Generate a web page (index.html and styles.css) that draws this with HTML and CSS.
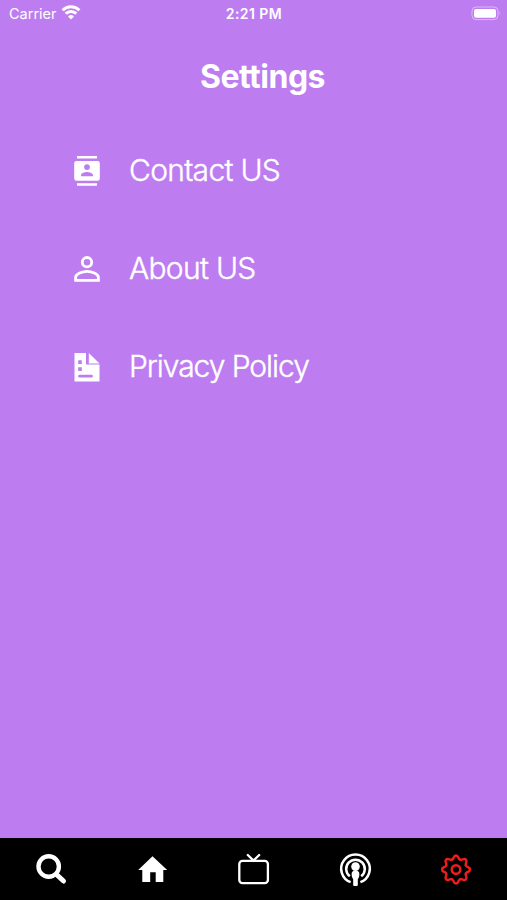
FILE: index.html
```
<!DOCTYPE html>
<html lang="en">
<head>
  <meta charset="utf-8">
  <title>Settings</title>
  <link rel="stylesheet" href="styles.css">
</head>
<body>
  <div class="screen">
    <header class="status-bar">
      <div class="carrier">
        <span>Carrier</span>
        <svg width="20" height="15" viewBox="0 0 20 15" fill="none" stroke="#fff" stroke-width="2.9">
          <path d="M1.6 5.2a12 12 0 0 1 16.8 0"/>
          <path d="M4.7 8.6a7.6 7.6 0 0 1 10.6 0"/>
          <path d="M10 14.5l-3-3a4.4 4.4 0 0 1 6 0z" fill="#fff" stroke="none"/>
        </svg>
      </div>
      <span class="time">2:21 PM</span>
      <svg class="battery" width="31" height="15" viewBox="0 0 31 15">
        <rect x="1" y="1" width="26" height="12.6" rx="4" fill="none" stroke="#fff" stroke-opacity=".45"/>
        <rect x="3" y="3" width="22" height="8.8" rx="2" fill="#fff"/>
        <path d="M28.6 5.2q1.7 2 0 4z" fill="#fff" fill-opacity=".5"/>
      </svg>
    </header>

    <h1>Settings</h1>

    <ul class="menu">
      <li>
        <svg width="30" height="32" viewBox="0 0 30 32">
          <path fill="#fff" fill-rule="evenodd" d="M5 1h20v2.6H5zM5 28.2h20v2.6H5zM4.5 6h21a2.3 2.3 0 0 1 2.3 2.3v15.2a2.3 2.3 0 0 1-2.3 2.3h-21a2.3 2.3 0 0 1-2.3-2.3V8.3A2.3 2.3 0 0 1 4.5 6zM15 9.2a2.9 2.9 0 1 0 0 5.8a2.9 2.9 0 0 0 0-5.8zM9 21.3h12v-1.3c0-2-4-3.1-6-3.1s-6 1.1-6 3.1z"/>
        </svg>
        <span class="contact">Contact US</span>
      </li>
      <li>
        <svg width="30" height="32" viewBox="0 0 30 32" fill="none" stroke="#fff" stroke-width="2.8">
          <circle cx="15" cy="9.2" r="4.7"/>
          <path d="M3.6 27.4v-3c0-3.6 7-6.1 11.4-6.1s11.4 2.5 11.4 6.1v3z"/>
        </svg>
        <span class="about">About US</span>
      </li>
      <li>
        <svg width="30" height="32" viewBox="0 0 30 32">
          <path fill="#fff" fill-rule="evenodd" d="M2.5 2H14v11.5h13.5v17h-25zM6.200 9.300h3.600v3.600H6.200zM6.200 16.300h3.600v3.600H6.200zM7.500 23.800h12a1.400 1.400 0 0 1 0 2.800h-12a1.400 1.400 0 0 1 0-2.800z"/>
          <path fill="#fff" d="M16.800 2l10.700 10.400H16.800z"/>
        </svg>
        <span class="privacy">Privacy Policy</span>
      </li>
    </ul>

    <nav class="tab-bar">
      <a class="tab">
        <svg width="36" height="36" viewBox="0 0 36 36" fill="none" stroke="#fff">
          <circle cx="15.7" cy="15.5" r="10.2" stroke-width="4.4"/>
          <path d="M23.5 23.5l7 6.5" stroke-width="5" stroke-linecap="round"/>
        </svg>
      </a>
      <a class="tab">
        <svg width="36" height="36" viewBox="0 0 36 36">
          <path fill="#fff" d="M18.5 5.3L33.2 19h-3.9v12h-7.6v-9.7h-5.500V31H8.300V19H4.200z"/>
        </svg>
      </a>
      <a class="tab">
        <svg width="36" height="36" viewBox="0 0 36 36" fill="none" stroke="#fff" stroke-width="2.3" stroke-linecap="round">
          <rect x="4.3" y="9.8" width="28.6" height="22.4" rx="3.2"/>
          <path d="M12.8 4l5.7 5.6L24.2 4"/>
        </svg>
      </a>
      <a class="tab">
        <svg width="36" height="36" viewBox="0 0 36 36" fill="none" stroke="#fff" stroke-width="2.5">
          <path d="M13.6 31.2a14.3 14.3 0 1 1 9.8 0"/>
          <path d="M12.8 25.3a9.3 9.3 0 1 1 11.4 0"/>
          <circle cx="18.5" cy="15.6" r="4.3" fill="#fff" stroke="none"/>
          <path d="M14.6 23.3q0-3.7 3.9-3.7t3.900 3.700q0 3.500-1.600 5V34q0 1-1 1h-2.600q-1 0-1-1v-5.700q-1.600-1.500-1.600-5z" fill="#fff" stroke="none"/>
        </svg>
      </a>
      <a class="tab active">
        <svg width="36" height="36" viewBox="-18 -18.5 36 36" fill="none" stroke="#f01d1d" stroke-width="2.4" stroke-linecap="round">
          <defs>
            <path id="tooth" d="M-4.1-9.8C-1.3-11-3.2-14 0-14S1.3-11 4.1-9.8"/>
          </defs>
          <circle r="4.3"/>
          <use href="#tooth"/>
          <use href="#tooth" transform="rotate(45)"/>
          <use href="#tooth" transform="rotate(90)"/>
          <use href="#tooth" transform="rotate(135)"/>
          <use href="#tooth" transform="rotate(180)"/>
          <use href="#tooth" transform="rotate(225)"/>
          <use href="#tooth" transform="rotate(270)"/>
          <use href="#tooth" transform="rotate(315)"/>
        </svg>
      </a>
    </nav>
  </div>
</body>
</html>
```

FILE: styles.css
```
body {
  margin: 0;
  font-family: Inter, "Liberation Sans", sans-serif;
  color: #fff;
}

.screen {
  display: flex;
  flex-direction: column;
  height: 900px;
  background-color: #bd7df0;
}

.status-bar {
  display: grid;
  grid-template-columns: 1fr auto 1fr;
  align-items: center;
  height: 27px;
  padding: 0 5px 0 9px;
  font-size: 14.5px;
}

.carrier {
  display: flex;
  align-items: center;
  gap: 4px;
}

.carrier svg {
  margin-bottom: 2px;
}

.time {
  font-weight: 600;
  font-size: 14px;
  letter-spacing: 0.45px;
  margin-right: 3px;
}

.battery {
  justify-self: end;
}

h1 {
  margin: 30px 0 0 18px;
  font-size: 32px;
  line-height: 40px;
  font-weight: 700;
  text-align: center;
  letter-spacing: -0.5px;
}

.menu {
  flex: 1;
  list-style: none;
  margin: 24px 0 0;
  padding: 0 0 0 71px;
}

.menu li {
  display: flex;
  align-items: center;
  gap: 28px;
  height: 98px;
  font-size: 30px;
  font-weight: 300;
  -webkit-text-stroke: 0.4px #fff;
}

.menu svg {
  margin: 1px -0.5px 0 0.5px;
}

.contact {
  letter-spacing: -0.7px;
}

.about {
  letter-spacing: -0.7px;
}

.privacy {
  letter-spacing: -1.05px;
}

.tab-bar {
  display: grid;
  grid-template-columns: repeat(5, 1fr);
  height: 62px;
  background-color: #000;
}

.tab {
  display: flex;
  align-items: center;
  justify-content: center;
}
```
